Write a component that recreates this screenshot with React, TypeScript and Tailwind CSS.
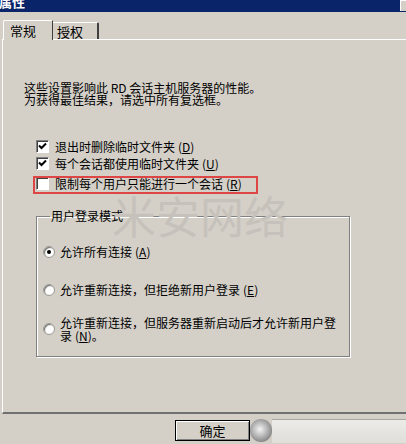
import React from 'react';

const Check: React.FC<{ checked?: boolean }> = ({ checked }) => (
  <div className="w-[13px] h-[13px] shrink-0 bg-white border border-[#808080] border-b-white border-r-white shadow-[inset_1px_1px_0_#404040] flex items-center justify-center">
    {checked && (
      <svg width="9" height="9" viewBox="0 0 9 9">
        <path d="M1 3.5 L3.5 6 L8 1.5" stroke="#000" strokeWidth="2" fill="none" />
      </svg>
    )}
  </div>
);

const Radio: React.FC<{ checked?: boolean }> = ({ checked }) => (
  <div className="w-[12px] h-[12px] shrink-0 rounded-full bg-white border border-[#9a9892] shadow-[inset_1px_1px_1px_#6f6d68] flex items-center justify-center">
    {checked && <div className="w-[4px] h-[4px] rounded-full bg-black" />}
  </div>
);

const Hot: React.FC<{ k: string }> = ({ k }) => (
  <span className="ml-[3px]">(<span className="underline">{k}</span>)</span>
);

export default function App() {
  return (
    <div className="relative w-[406px] h-[444px] overflow-hidden bg-[#d4d0c8] text-[12px] leading-[12px] text-black font-['Noto_Sans_CJK_SC','Noto_Sans',sans-serif]">
      {/* title bar */}
      <div className="h-[12px] bg-[#0a246a] overflow-hidden flex justify-between">
        <span className="-mt-[4px] -ml-[1px] text-[13px] leading-[12px] font-bold text-white">属性</span>
        <div className="w-[6px] h-[11px] bg-[#d4d0c8] border-l border-t border-white" />
      </div>

      {/* tabs */}
      <div className="h-[27px] pl-[3px] flex items-end">
        <div className="w-[50px] h-[20px] bg-[#d4d0c8] border-l border-t border-white border-r border-r-[#404040] rounded-tl-[2px] pl-[6px] pt-[3px] text-[13px] leading-[13px] relative z-10 -mb-[1px]">
          常规
        </div>
        <div className="w-[46px] h-[17px] border-t border-white border-r-2 border-r-[#404040] rounded-tr-[2px] pl-[4px] pt-[2px] text-[13px] leading-[13px]">
          授权
        </div>
      </div>

      {/* panel */}
      <div className="ml-[2px] w-[410px] h-[375px] border-l border-t border-white border-b-2 border-b-[#707070]">
        <div className="mt-[42px] pl-[21px]">
          <div>这些设置影响此 RD 会话主机服务器的性能。</div>
          <div>为获得最佳结果，请选中所有复选框。</div>
        </div>

        <div className="mt-[32px] pl-[33px]">
          <div className="h-[17px] flex items-center gap-[6px]">
            <Check checked />
            <span>退出时删除临时文件夹<Hot k="D" /></span>
          </div>
          <div className="h-[17px] flex items-center gap-[6px]">
            <Check checked />
            <span>每个会话都使用临时文件夹<Hot k="U" /></span>
          </div>
          <div className="mt-[3px] h-[17px] flex items-center gap-[6px]">
            <Check />
            <span>限制每个用户只能进行一个会话<Hot k="R" /></span>
          </div>
        </div>

        <fieldset className="mt-[18px] ml-[33px] w-[314px] border border-[#808080] shadow-[inset_1px_1px_0_#fff,1px_1px_0_#fff] pl-[6px] pb-[14px]">
          <legend className="ml-[7px] px-[1px] leading-[12px]">用户登录模式</legend>
          <div className="mt-[21px] h-[17px] flex items-center gap-[5px]">
            <Radio checked />
            <span>允许所有连接<Hot k="A" /></span>
          </div>
          <div className="mt-[21px] h-[17px] flex items-center gap-[5px]">
            <Radio />
            <span>允许重新连接，但拒绝新用户登录<Hot k="E" /></span>
          </div>
          <div className="mt-[18px] flex items-center gap-[5px]">
            <Radio />
            <span className="leading-[13px]">
              允许重新连接，但服务器重新启动后才允许新用户登
              <br />
              录<Hot k="N" />。
            </span>
          </div>
        </fieldset>
      </div>

      {/* bottom buttons */}
      <div className="mt-[6px] pl-[175px] flex items-start">
        <div className="w-[75px] h-[21px] border border-black bg-[#d4d0c8] shadow-[inset_1px_1px_0_#fff,inset_-1px_-1px_0_#808080] flex items-center justify-center text-[13px]">
          确定
        </div>
        <div className="w-[22px] h-[23px] -mt-[1px] rounded-full bg-[radial-gradient(circle_at_45%_45%,#f4f4f4,#9a9a9a_60%,#5a5a5a)]" />
        <div className="flex-1 h-[24px] -mt-[1px] border-t border-[#a8a6a0] bg-[linear-gradient(to_bottom,#ecebe8,#e0ded9)]" />
      </div>

      {/* watermark */}
      <div className="absolute left-[112px] top-[193px] text-[44px] leading-[44px] text-[#c6c2bb] pointer-events-none select-none">
        米安网络
      </div>

      {/* red annotation box */}
      <div className="absolute left-[33px] top-[176px] w-[225px] h-[18px] border-2 border-[#de4646] pointer-events-none" />
    </div>
  );
}
